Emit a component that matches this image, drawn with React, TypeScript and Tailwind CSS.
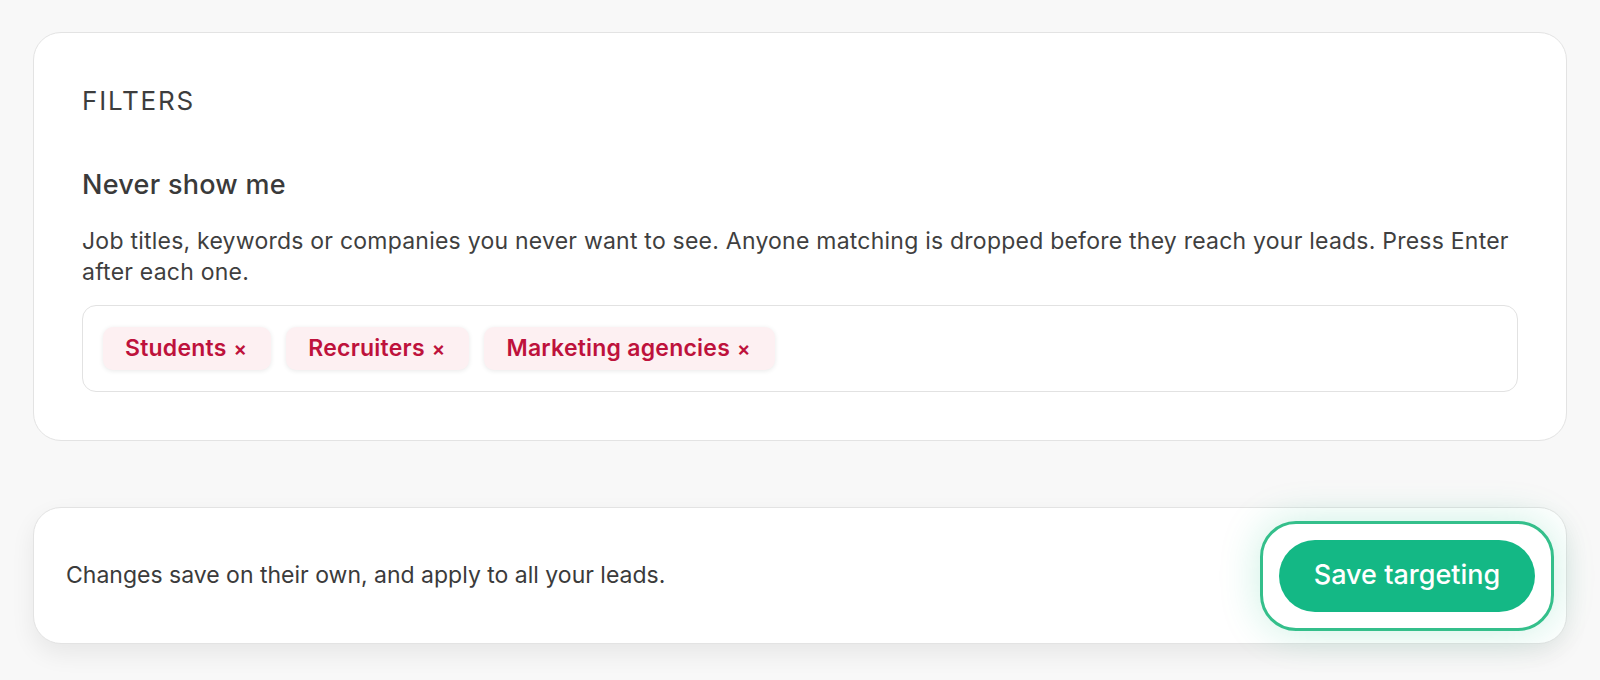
const tags = ['Students', 'Recruiters', 'Marketing agencies'];

export default function App() {
  return (
    <div
      className="min-h-screen bg-[#f8f8f8] px-[33px] pt-[32px] pb-12 text-[#3b3b3b]"
      style={{ fontFamily: 'Inter, "Noto Sans", sans-serif' }}
    >
      <section className="rounded-[28px] border border-[#e3e3e3] bg-white px-12 pt-[52px] pb-12">
        <h2 className="text-[26px] leading-[32px] tracking-[0.07em] text-[#3d3d3d]">FILTERS</h2>

        <h3 className="mt-[51px] text-[27px] font-[450] leading-[34px] tracking-[0.01em] text-[#3a3a3a]">
          Never show me
        </h3>
        <p className="mt-6 text-[23px] leading-[31px] tracking-[0.01em] text-[#3f3f3f]">
          Job titles, keywords or companies you never want to see. Anyone matching is dropped before they
          reach your leads. Press Enter after each one.
        </p>

        <div className="mt-[17px] flex h-[87px] items-center gap-[15px] rounded-[14px] border border-[#e2e2e2] px-5">
          {tags.map((t) => (
            <span
              key={t}
              className="flex h-[43px] items-center rounded-[10px] bg-[#fdf0f2] pl-[22px] pr-6 text-[23px] font-semibold tracking-[0.01em] text-[#be123c] shadow-[0_1px_5px_rgba(0,0,0,0.09)]"
            >
              {t}
              <span className="ml-[7px] text-[20px]">×</span>
            </span>
          ))}
        </div>
      </section>

      <footer className="mt-[66px] flex h-[137px] items-center justify-between rounded-[28px] border border-[#e3e3e3] bg-white pl-8 pr-3 shadow-[0_10px_24px_rgba(0,0,0,0.07)]">
        <p className="text-[23px] text-[#3b3b3b]">Changes save on their own, and apply to all your leads.</p>
        <div className="rounded-[36px] border-[3px] border-[#34bf8b] bg-white p-4 shadow-[0_0_40px_rgba(16,185,129,0.22)]">
          <button
            type="button"
            className="flex h-[72px] w-[256px] items-center justify-center rounded-full bg-[#14b885] text-[27px] font-medium text-white"
          >
            Save targeting
          </button>
        </div>
      </footer>
    </div>
  );
}
